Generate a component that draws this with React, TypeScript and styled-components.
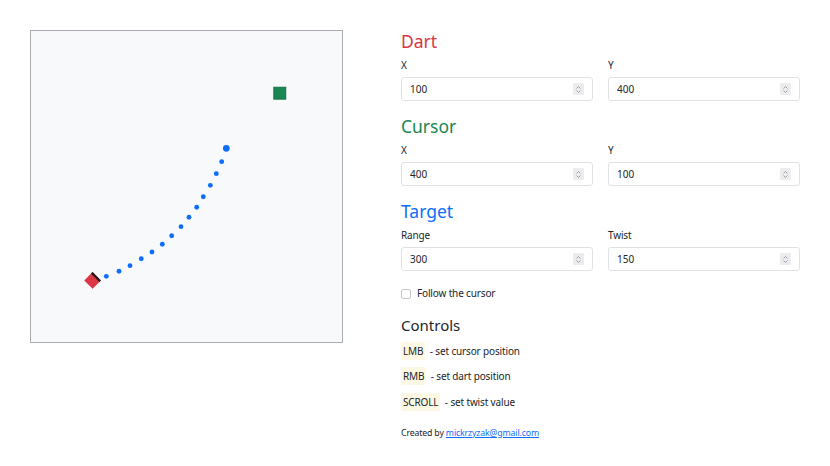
import React from "react";
import styled, { createGlobalStyle } from "styled-components";

const GlobalStyle = createGlobalStyle`
  html, body { margin: 0; padding: 0; background: #ffffff; }
  body {
    font-family: "Noto Sans", "Open Sans", sans-serif;
    font-size: 10px;
    line-height: 1.5;
    color: #212529;
    letter-spacing: -0.15px;
  }
  * { box-sizing: border-box; }
`;

const Page = styled.main`
  display: flex;
  align-items: flex-start;
  gap: 58px;
  padding: 30px 0 0 30px;
`;

const Board = styled.div`
  width: 313px;
  height: 313px;
  border: 1px solid #a9acb0;
  background: #f8f9fa;
  display: flex;
`;

const Panel = styled.section`
  width: 399px;
  padding-top: 1px;
  display: flex;
  flex-direction: column;
`;

const Group = styled.div`
  margin-bottom: 15px;
`;

const Heading = styled.h3<{ $color: string }>`
  margin: 0 0 6px;
  font-size: 17.5px;
  font-weight: 400;
  line-height: 1.2;
  letter-spacing: 0;
  color: ${(p) => p.$color};
`;

const Fields = styled.div`
  display: grid;
  grid-template-columns: 1fr 1fr;
  column-gap: 15px;
`;

const Field = styled.label`
  display: flex;
  flex-direction: column;
  gap: 4px;
`;

const FieldName = styled.span`
  line-height: 15px;
`;

const NumberBox = styled.div`
  height: 24px;
  display: flex;
  align-items: center;
  border: 1px solid #dee2e6;
  border-radius: 3px;
  padding: 0 8px 0 8px;
  background: #fff;
`;

const NumberInput = styled.input`
  flex: 1;
  min-width: 0;
  border: 0;
  outline: none;
  padding: 0;
  background: transparent;
  font: inherit;
  font-size: 10px;
  color: #212529;
`;

const Spinner = styled.span`
  width: 11px;
  height: 12px;
  background: #ececef;
  border-radius: 1px;
  display: flex;
  align-items: center;
  justify-content: center;
`;

const CheckRow = styled.label`
  display: flex;
  align-items: center;
  gap: 6px;
  line-height: 15px;
  margin-bottom: 15px;
`;

const Check = styled.input`
  appearance: none;
  margin: 0;
  width: 10px;
  height: 10px;
  border: 1px solid #c4c8cc;
  border-radius: 2px;
  background: #fff;
`;

const SubHeading = styled.h4`
  margin: 0 0 10px;
  font-size: 15px;
  font-weight: 400;
  line-height: 1.2;
  letter-spacing: 0;
`;

const Hint = styled.p`
  margin: 0 0 10.3px;
  line-height: 15px;
`;

const Key = styled.mark`
  background: #fcf8e3;
  color: #212529;
  padding: 2px 2px;
  margin-right: 2px;
`;

const Credit = styled.p`
  margin: 7px 0 0;
  font-size: 8.75px;
  line-height: 13px;
`;

const MailLink = styled.a`
  color: #0d6efd;
  text-decoration: underline;
`;

const SpinIcon = () => (
  <svg width="7" height="9" viewBox="0 0 7 9">
    <path d="M1.5 3.5 L3.5 1.5 L5.5 3.5 M1.5 5.5 L3.5 7.5 L5.5 5.5" fill="none" stroke="#8c8f94" strokeWidth="0.8" />
  </svg>
);

const NumberField = ({ label, value }: { label: string; value: number }) => (
  <Field>
    <FieldName>{label}</FieldName>
    <NumberBox>
      <NumberInput type="text" defaultValue={String(value)} />
      <Spinner>
        <SpinIcon />
      </Spinner>
    </NumberBox>
  </Field>
);

const trail: [number, number][] = [
  [306.6, 210.1],
  [297.9, 229.4],
  [288.3, 248.1],
  [277, 266.4],
  [266.4, 283.4],
  [254, 299.5],
  [241.2, 314.6],
  [226.2, 329.1],
  [211.1, 342.9],
  [194.5, 355.3],
  [177.3, 366.1],
  [159.2, 377.3],
  [141.5, 386.3],
  [121.1, 394.4],
];

const Scene = () => (
  <svg width="311" height="311" viewBox="0 0 500 500">
    <rect x="390.4" y="90.4" width="19.2" height="19.2" fill="#198754" stroke="#146c43" strokeWidth="1.5" />
    {trail.map(([x, y], i) => (
      <circle key={i} cx={x} cy={y} r="3.9" fill="#0d6efd" />
    ))}
    <circle cx="314" cy="188.6" r="5.4" fill="#0d6efd" />
    <g transform="translate(99 401) rotate(-45)">
      <rect x="-9.5" y="-9.5" width="19" height="19" fill="#dc3545" />
      <rect x="6" y="-9.5" width="3.5" height="19" fill="#1a1a1a" />
    </g>
  </svg>
);

export default function App() {
  return (
    <>
      <GlobalStyle />
      <Page>
        <Board>
          <Scene />
        </Board>
        <Panel>
          <Group>
            <Heading $color="#dc3545">Dart</Heading>
            <Fields>
              <NumberField label="X" value={100} />
              <NumberField label="Y" value={400} />
            </Fields>
          </Group>
          <Group>
            <Heading $color="#198754">Cursor</Heading>
            <Fields>
              <NumberField label="X" value={400} />
              <NumberField label="Y" value={100} />
            </Fields>
          </Group>
          <Group>
            <Heading $color="#0d6efd">Target</Heading>
            <Fields>
              <NumberField label="Range" value={300} />
              <NumberField label="Twist" value={150} />
            </Fields>
          </Group>
          <CheckRow>
            <Check type="checkbox" />
            Follow the cursor
          </CheckRow>
          <SubHeading>Controls</SubHeading>
          <Hint>
            <Key>LMB</Key> - set cursor position
          </Hint>
          <Hint>
            <Key>RMB</Key> - set dart position
          </Hint>
          <Hint>
            <Key>SCROLL</Key> - set twist value
          </Hint>
          <Credit>
            Created by <MailLink href="#">mickrzyzak@gmail.com</MailLink>
          </Credit>
        </Panel>
      </Page>
    </>
  );
}
